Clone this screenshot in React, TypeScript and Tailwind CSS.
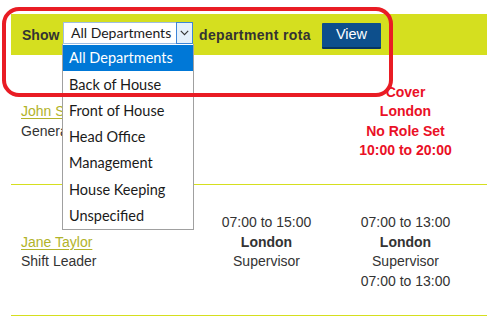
import React from "react";

const items = [
  "All Departments",
  "Back of House",
  "Front of House",
  "Head Office",
  "Management",
  "House Keeping",
  "Unspecified",
];

export default function App() {
  return (
    <div
      className="relative w-[487px] h-[332px] overflow-hidden bg-white text-[#333333] text-[14px]"
      style={{ fontFamily: '"Liberation Sans", Arial, sans-serif' }}
    >
      <div className="pt-[14px] pl-[11px]">
        {/* header bar */}
        <div className="relative z-20 h-[41px] bg-[#d5df1f] flex items-center pl-[11px]">
          <span className="w-[41px] font-bold leading-none">Show</span>
          <div className="relative w-[130px] h-[22px] mb-[3px] bg-white border border-[#9fbde3] flex items-center">
            <span
              className="pl-[7px] flex-1 text-[14px] text-[#1a1a1a] leading-none"
              style={{ fontFamily: '"Segoe UI", Lato, sans-serif' }}
            >
              All Departments
            </span>
            <div className="w-[17px] h-[22px] -mr-px -my-px border border-[#3d86d8] bg-[#e5f1fb] flex items-center justify-center">
              <svg width="9" height="6" viewBox="0 0 9 6">
                <polyline points="0.8,0.8 4.5,4.6 8.2,0.8" fill="none" stroke="#333" strokeWidth="1.1" />
              </svg>
            </div>
            {/* dropdown list */}
            <div
              className="absolute left-[-2px] top-[21px] w-[132px] bg-white border border-[#a0a0a0] border-t-0 pt-px"
              style={{ fontFamily: '"Segoe UI", Lato, sans-serif' }}
            >
              {items.map((it, i) => (
                <div
                  key={it}
                  className={
                    i === 0
                      ? "h-[26.3px] flex items-center pl-[6px] bg-[#0078d7] text-white text-[14.5px]"
                      : "h-[26.3px] flex items-center pl-[6px] text-[#1a1a1a] text-[14.5px]"
                  }
                >
                  {it}
                </div>
              ))}
            </div>
          </div>
          <span className="ml-[6px] w-[123px] font-bold leading-none tracking-[0.35px]">department rota</span>
          <button className="w-[59px] h-[26px] mt-[2px] bg-[#0d4f8c] border-b-2 border-[#07355f] text-white text-[14.5px] leading-none rounded-[1px]">
            View
          </button>
        </div>

        {/* table */}
        <div className="grid grid-cols-[186px_139px_139px_1fr] leading-[19.5px]">
          {/* row 1 */}
          <div className="h-[130px] pt-[4px] flex flex-col justify-center pl-[10px] border-b border-[#d5df1f]">
            <a className="text-[#b2b32a] underline decoration-1 underline-offset-2">John Smith</a>
            <span>General Manager</span>
          </div>
          <div className="h-[130px] border-b border-[#d5df1f]" />
          <div className="h-[130px] pt-[4px] flex flex-col justify-center items-center border-b border-[#d5df1f] text-[#ea1026] font-bold">
            <span>Cover</span>
            <span>London</span>
            <span>No Role Set</span>
            <span>10:00 to 20:00</span>
          </div>
          <div className="h-[130px] border-b border-[#d5df1f]" />

          {/* row 2 */}
          <div className="h-[131px] pt-[4px] flex flex-col justify-center pl-[10px] border-b border-[#d5df1f]">
            <a className="text-[#b2b32a] underline decoration-1 underline-offset-2">Jane Taylor</a>
            <span>Shift Leader</span>
          </div>
          <div className="h-[131px] pt-[4px] flex flex-col justify-center items-center border-b border-[#d5df1f]">
            <span>07:00 to 15:00</span>
            <span className="font-bold">London</span>
            <span>Supervisor</span>
            <span>&nbsp;</span>
          </div>
          <div className="h-[131px] pt-[4px] flex flex-col justify-center items-center border-b border-[#d5df1f]">
            <span>07:00 to 13:00</span>
            <span className="font-bold">London</span>
            <span>Supervisor</span>
            <span>07:00 to 13:00</span>
          </div>
          <div className="h-[131px] border-b border-[#d5df1f]" />
        </div>
      </div>

      {/* red annotation outline */}
      <div className="absolute z-30 left-[2px] top-[7px] w-[391px] h-[90px] border-[4px] border-[#e91c24] rounded-[17px] pointer-events-none" />
    </div>
  );
}
